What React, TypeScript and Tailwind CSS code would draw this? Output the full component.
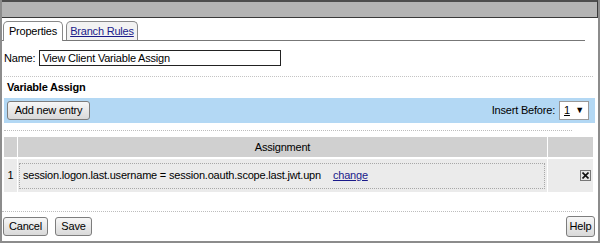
import React from "react";

function Btn({ children, className = "" }: { children: React.ReactNode; className?: string }) {
  return (
    <button
      className={
        "h-[19px] px-[4px] text-[11px] text-black whitespace-nowrap border border-[#7d7d7d] rounded-[3px] bg-gradient-to-b from-[#f7f7f7] to-[#d9d9d9] leading-none flex items-center justify-center " +
        className
      }
    >
      {children}
    </button>
  );
}

export default function App() {
  return (
    <div
      className="w-[600px] h-[243px] bg-white text-[11px] tracking-[-0.2px] text-black border-l-2 border-r-2 border-b-2 border-[#8c8c8c] flex flex-col"
      style={{ fontFamily: "'Liberation Sans', Arial, sans-serif" }}
    >
      {/* header bar */}
      <div className="h-[18px] bg-[#b4b4b4] border-t-2 border-t-[#4d4d4d] border-b border-b-[#3a3a3a] border-r border-r-[#3a3a3a] shrink-0" />

      {/* tabs */}
      <div className="flex items-end h-[23px] pl-[1px] mr-[13px] border-b border-[#777]">
        <div className="h-[20px] w-[60px] flex items-center justify-center border border-b-0 border-[#888] rounded-t-[5px] bg-white -mb-px pb-px">
          Properties
        </div>
        <div className="ml-[3px] h-[19px] w-[72px] flex items-center justify-center border border-b-0 border-[#888] rounded-t-[5px] bg-[#f2f2f2]">
          <span className="text-[#1a1a8a] underline">Branch Rules</span>
        </div>
      </div>

      {/* name row */}
      <div className="flex items-center h-[26px] pl-[2px] mt-[4px]">
        <span>Name:</span>
        <div className="ml-[4px] w-[242px] h-[16px] border border-[#222] flex items-center px-[2px]">
          View Client Variable Assign
        </div>
      </div>

      <div className="mt-[5px] ml-[2px] mr-[5px] border-t border-dotted border-[#c4c4c4]" />

      <div className="pl-[5px] mt-[3px] font-bold h-[15px] leading-[15px]">Variable Assign</div>

      {/* blue band */}
      <div className="mt-[3px] ml-[2px] mr-[3px] h-[25px] bg-[#b3d8f4] flex items-center justify-between pl-[3px] pr-[6px]">
        <Btn className="w-[83px]">Add new entry</Btn>
        <div className="flex items-center">
          <span>Insert Before:</span>
          <div className="ml-[4px] w-[30px] h-[19px] bg-white border border-[#999] flex items-center justify-between px-[4px]">
            <span className="underline">1</span>
            <span className="text-[9px]">▼</span>
          </div>
        </div>
      </div>

      <div className="mt-[7px] ml-[2px] mr-[26px] border-t border-dotted border-[#bdbdbd]" />

      {/* table */}
      <div className="mt-[6px] ml-[2px] mr-[5px] flex flex-col">
        <div className="flex h-[20px] bg-[#d0d0d0]">
          <div className="w-[14px] border-r border-white" />
          <div className="flex-1 flex items-center justify-center border-r border-white">Assignment</div>
          <div className="w-[45px]" />
        </div>
        <div className="flex h-[35px] bg-[#ebebeb] border-t-2 border-white">
          <div className="w-[14px] flex items-center justify-center border-r border-white">1</div>
          <div className="flex-1 border-r border-white flex items-center pl-[1px] pr-[2px]">
            <div className="flex-1 h-[26px] border border-dotted border-[#a8a8a8] flex items-center pl-[3px]">
              <span>session.logon.last.username = session.oauth.scope.last.jwt.upn</span>
              <span className="ml-[12px] text-[#1a1a8a] underline">change</span>
            </div>
          </div>
          <div className="w-[45px] flex items-center justify-end pr-[2px]">
            <div className="w-[11px] h-[11px] border border-[#777] bg-[#e6e6e6] flex items-center justify-center">
              <svg width="7" height="7" viewBox="0 0 7 7">
                <path d="M0.5 0.5 L6.5 6.5 M6.5 0.5 L0.5 6.5" stroke="#111" strokeWidth="1.6" />
              </svg>
            </div>
          </div>
        </div>
      </div>

      <div className="mt-[19px] mr-[16px] border-t border-dotted border-[#bdbdbd]" />

      {/* footer buttons */}
      <div className="flex items-center justify-between mt-[4px] pl-[1px] pr-[3px]">
        <div className="flex gap-[7px]">
          <Btn className="w-[45px]">Cancel</Btn>
          <Btn className="w-[37px]">Save</Btn>
        </div>
        <Btn className="w-[29px] h-[21px] px-[2px]">Help</Btn>
      </div>
    </div>
  );
}
